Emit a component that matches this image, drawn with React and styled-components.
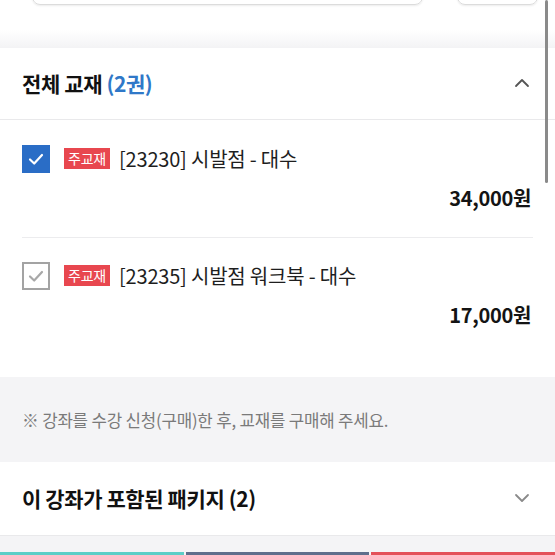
import React from 'react'
import { styled, createGlobalStyle } from 'styled-components'

const GlobalStyle = createGlobalStyle`
  html, body {
    margin: 0;
    padding: 0;
    background: #ffffff;
  }
  body {
    font-family: "Noto Sans CJK KR", "Noto Sans", sans-serif;
    color: #1b1b1b;
    overflow: hidden;
  }
`

const Page = styled.div`
  width: 555px;
  height: 555px;
  overflow: hidden;
  position: relative;
`

const TopBar = styled.div`
  height: 30px;
  display: flex;
  align-items: flex-start;
  gap: 34px;
  padding-left: 32px;
  background: #fff;
`

const GhostButton = styled.div`
  width: ${(p) => p.w}px;
  height: 40px;
  margin-top: -37px;
  border: 1px solid #dcdcdc;
  border-radius: 8px;
  box-shadow: 0 1px 2px rgba(0, 0, 0, 0.08);
`

const Shade = styled.div`
  height: 18px;
  background: linear-gradient(#ffffff, #f3f3f5);
`

const Section = styled.section`
  background: #fff;
`

const Header = styled.div`
  height: ${(p) => p.h}px;
  display: flex;
  align-items: center;
  justify-content: space-between;
  padding: 0 24px 2px 22px;
  border-bottom: 1px solid #e9e9eb;
  box-sizing: border-box;
`

const Title = styled.h2`
  margin: 0;
  font-size: 21px;
  font-weight: 700;
  letter-spacing: -0.4px;
  color: #111;
  span {
    color: #2f78c8;
  }
`

const Item = styled.div`
  margin: 0 22px;
  padding: ${(p) => p.top}px 0 ${(p) => p.bottom}px;
  border-bottom: ${(p) => (p.last ? 'none' : '1px solid #ececee')};
  display: flex;
  flex-direction: column;
`

const ItemRow = styled.div`
  display: flex;
  align-items: center;
`

const Check = styled.div`
  width: 28px;
  height: 28px;
  box-sizing: border-box;
  flex: none;
  display: flex;
  align-items: center;
  justify-content: center;
  background: ${(p) => (p.on ? '#2a6dc6' : '#fff')};
  border: ${(p) => (p.on ? 'none' : '2px solid #a3a3a3')};
`

const Badge = styled.span`
  margin-left: 14px;
  background: #e8474f;
  color: #fff;
  font-size: 14px;
  line-height: 21px;
  padding: 0 4px;
  letter-spacing: -0.2px;
`

const ItemName = styled.span`
  margin-left: 9px;
  font-size: 20px;
  color: #1e1e1e;
  letter-spacing: -0.2px;
`

const Price = styled.div`
  align-self: flex-end;
  margin-top: ${(p) => p.gap}px;
  margin-right: 2px;
  font-size: 20px;
  font-weight: 700;
  letter-spacing: -0.3px;
  color: #141414;
`

const Notice = styled.div`
  height: 85px;
  background: #f4f4f6;
  display: flex;
  align-items: center;
  padding-left: 22px;
  font-size: 16.8px;
  color: #7a7a7a;
  letter-spacing: -0.2px;
`

const Gap = styled.div`
  height: 16px;
  background: #f4f4f6;
`

const ButtonRow = styled.div`
  display: grid;
  grid-template-columns: 1fr 1fr 1fr;
  gap: 2px;
  height: 40px;
  background: #f4f4f6;
`

const BottomButton = styled.div`
  background: ${(p) => p.color};
`

const Scrollbar = styled.div`
  position: absolute;
  right: 7px;
  top: 0;
  width: 3px;
  height: 183px;
  background: #8a8a8a;
  border-radius: 2px;
`

const Chevron = ({ up }) => (
  <svg width="18" height="18" viewBox="0 0 18 18" fill="none">
    <path
      d={up ? 'M3 12 L9 6 L15 12' : 'M3 6 L9 12 L15 6'}
      stroke={up ? '#555' : '#8a8a8a'}
      strokeWidth="1.8"
      strokeLinecap="round"
      strokeLinejoin="round"
    />
  </svg>
)

const Tick = ({ color }) => (
  <svg width="18" height="18" viewBox="0 0 18 18" fill="none">
    <path d="M3 9.5 L7.2 13.5 L15 5" stroke={color} strokeWidth="2.2" strokeLinecap="round" strokeLinejoin="round" />
  </svg>
)

const books = [
  { id: 1, on: true, name: '[23230] 시발점 - 대수', price: '34,000원' },
  { id: 2, on: false, name: '[23235] 시발점 워크북 - 대수', price: '17,000원' },
]

export default function App() {
  return (
    <>
      <GlobalStyle />
      <Page>
        <TopBar>
          <GhostButton w={389} />
          <GhostButton w={79} />
        </TopBar>
        <Shade />
        <Section>
          <Header h={72}>
            <Title>
              전체 교재 <span>(2권)</span>
            </Title>
            <Chevron up />
          </Header>
          {books.map((b, i) => (
            <Item key={b.id} top={i === 0 ? 24 : 23} bottom={i === 0 ? 25 : 48} last={i === books.length - 1}>
              <ItemRow>
                <Check on={b.on}>
                  <Tick color={b.on ? '#fff' : '#a8a8a8'} />
                </Check>
                <Badge>주교재</Badge>
                <ItemName>{b.name}</ItemName>
              </ItemRow>
              <Price gap={10}>{b.price}</Price>
            </Item>
          ))}
        </Section>
        <Notice>※ 강좌를 수강 신청(구매)한 후, 교재를 구매해 주세요.</Notice>
        <Section>
          <Header h={74}>
            <Title>이 강좌가 포함된 패키지 (2)</Title>
            <Chevron />
          </Header>
        </Section>
        <Gap />
        <ButtonRow>
          <BottomButton color="#5ccec7" />
          <BottomButton color="#5f6e8c" />
          <BottomButton color="#e4515a" />
        </ButtonRow>
        <Scrollbar />
      </Page>
    </>
  )
}
